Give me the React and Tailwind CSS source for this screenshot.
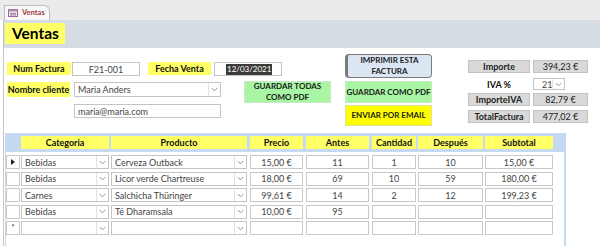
import React from 'react';

const COLS = [
  { key: 'cat', title: 'Categoria', cls: 'ml-[1px] w-[88px]', combo: true },
  { key: 'prod', title: 'Producto', cls: 'ml-[2px] w-[136px]', combo: true },
  { key: 'precio', title: 'Precio', cls: 'ml-[3px] w-[53px]' },
  { key: 'antes', title: 'Antes', cls: 'ml-[3px] w-[63px]' },
  { key: 'cant', title: 'Cantidad', cls: 'ml-[3px] w-[44px]' },
  { key: 'desp', title: 'Después', cls: 'ml-[2px] w-[65px]' },
  { key: 'sub', title: 'Subtotal', cls: 'ml-[2px] w-[68px]' },
];

const ROWS = [
  { mark: 'cur', cat: 'Bebidas', prod: 'Cerveza Outback', precio: '15,00 €', antes: '11', cant: '1', desp: '10', sub: '15,00 €' },
  { cat: 'Bebidas', prod: 'Licor verde Chartreuse', precio: '18,00 €', antes: '69', cant: '10', desp: '59', sub: '180,00 €' },
  { cat: 'Carnes', prod: 'Salchicha Thüringer', precio: '99,61 €', antes: '14', cant: '2', desp: '12', sub: '199,23 €' },
  { cat: 'Bebidas', prod: 'Té Dharamsala', precio: '10,00 €', antes: '95', cant: '', desp: '', sub: '' },
  { mark: 'new', cat: '', prod: '', precio: '', antes: '', cant: '', desp: '', sub: '' },
];

function Chevron() {
  return (
    <svg width="7" height="5" viewBox="0 0 7 5" className="text-[#8a8a8a]">
      <path d="M0.8 1 L3.5 3.8 L6.2 1" fill="none" stroke="currentColor" strokeWidth="0.9" />
    </svg>
  );
}

function Combo({ text, className }) {
  return (
    <div className={`flex items-stretch bg-white border border-[#c4c4c4] ${className}`}>
      <div className="flex-1 pl-[3px] flex items-center text-[#444] truncate">{text}</div>
      <div className="w-[12px] border-l border-[#e2e2e2] flex items-center justify-center">
        <Chevron />
      </div>
    </div>
  );
}

function Label({ children, className }) {
  return (
    <div className={`bg-[#ffff66] font-bold text-[#111] flex items-center justify-center ${className}`}>{children}</div>
  );
}

function GrayBox({ children, bold }) {
  return (
    <div className={`bg-[#d9d9d9] border border-[#c2c2c2] h-[13px] flex items-center justify-center text-[#222] ${bold ? 'font-bold w-[62px]' : 'ml-[3px] w-[55px]'}`}>{children}</div>
  );
}

function Button({ children, className }) {
  return (
    <div className={`flex items-center justify-center text-center whitespace-nowrap font-bold text-[8px] leading-[11px] text-[#1a1a1a] ${className}`}>{children}</div>
  );
}

export default function App() {
  return (
    <div className="w-[600px] h-[246px] overflow-hidden bg-white text-[9px] leading-none" style={{ fontFamily: 'Lato, "Open Sans", sans-serif' }}>
      {/* tab strip */}
      <div className="h-[20px] bg-[#ebebeb] flex items-end pl-[4px]">
        <div className="h-[15px] w-[46px] bg-[#f8f8f8] border border-b-0 border-[#bdbdbd] rounded-tr-[6px] flex items-center pl-[3px] gap-[4px]">
          <svg width="10" height="8" viewBox="0 0 10 8">
            <rect x="0.5" y="0.5" width="9" height="7" fill="#f3e6f0" stroke="#9a6a93" />
            <rect x="0.5" y="0.5" width="9" height="2" fill="#b98ab3" />
            <line x1="2" y1="4.5" x2="8" y2="4.5" stroke="#7d6a85" strokeWidth="0.8" />
            <line x1="2" y1="6" x2="8" y2="6" stroke="#7d6a85" strokeWidth="0.8" />
          </svg>
          <span className="text-[7.5px] font-bold text-[#a33a3f]">Ventas</span>
        </div>
      </div>

      <div className="ml-[3px] border-l border-[#c6c6c6]">
        {/* header band */}
        <div className="h-[28px] bg-[#d6dce4] pt-[3px] pl-[1px]">
          <div className="w-[60px] h-[21px] bg-[#ffff66] flex items-center pl-[7px] text-[15.5px] font-bold text-black">Ventas</div>
        </div>

        {/* form body */}
        <div className="h-[85px] flex items-start">
          <div className="w-[341px] pl-[3px]">
            <div className="mt-[14px] flex items-start">
              <Label className="w-[64px] h-[13px]">Num Factura</Label>
              <div className="ml-[1px] w-[68px] h-[14px] border border-[#c4c4c4] flex items-center justify-center text-[#444]">F21-001</div>
              <Label className="ml-[8px] w-[63px] h-[13px]">Fecha Venta</Label>
              <div className="ml-[3px] w-[68px] h-[14px] border border-[#c4c4c4] flex items-center pl-[11px]">
                <span className="bg-[#3a3a3a] text-white text-[8px] px-[1px] h-[11px] flex items-center">12/03/2021</span>
              </div>
            </div>
            <div className="mt-[5px] flex items-start">
              <div className="w-[237px] pt-[1px]">
                <div className="flex items-start">
                  <Label className="w-[63px] h-[15px]">Nombre cliente</Label>
                  <Combo text="Maria Anders" className="ml-[4px] w-[147px] h-[15px]" />
                </div>
                <div className="mt-[7px] ml-[67px] w-[147px] h-[14px] border border-[#c4c4c4] flex items-center pl-[3px] text-[#444]">maria@maria.com</div>
              </div>
              <Button className="w-[87px] h-[22px] bg-[#a8f5a3] border border-[#c9e8c6]">GUARDAR TODAS<br />COMO PDF</Button>
            </div>
          </div>

          <div className="w-[87px] pt-[6px]">
            <Button className="h-[24px] bg-[#dce6f2] border-[1.5px] border-l-[3px] border-[#7a7a7a] rounded-[4px]">IMPRIMIR ESTA<br />FACTURA</Button>
            <Button className="mt-[3px] h-[22px] bg-[#a8f5a3] border border-[#c9e8c6]">GUARDAR COMO PDF</Button>
            <Button className="mt-[2px] h-[21px] bg-[#ffff00] border border-[#e0e0a0]">ENVIAR POR EMAIL</Button>
          </div>

          <div className="ml-[36px] pt-[12px]">
            <div className="flex">
              <GrayBox bold>Importe</GrayBox>
              <GrayBox>394,23 €</GrayBox>
            </div>
            <div className="mt-[5px] flex items-center">
              <div className="w-[62px] text-center font-bold text-[#111]">IVA %</div>
              <Combo text={<span className="pl-[5px]">21</span>} className="ml-[3px] w-[32px] h-[12px]" />
            </div>
            <div className="mt-[3px] flex">
              <GrayBox bold>ImporteIVA</GrayBox>
              <GrayBox>82,79 €</GrayBox>
            </div>
            <div className="mt-[4px] flex">
              <GrayBox bold>TotalFactura</GrayBox>
              <GrayBox>477,02 €</GrayBox>
            </div>
          </div>
        </div>

        {/* subform */}
        <div className="ml-[1px] w-[561px] h-[120px] border border-r-2 border-[#c5d9f1]">
          <div className="h-[18px] bg-[#c5d9f1] flex pt-[2px]">
            <div className="w-[14px]" />
            {COLS.map(c => (
              <Label key={c.key} className={`h-[13px] ${c.cls}`}>{c.title}</Label>
            ))}
          </div>
          <div className="mt-[3px] flex flex-col gap-[2.5px]">
            {ROWS.map((r, i) => (
              <div key={i} className="flex h-[14px]">
                <div className="w-[14px] bg-white border border-[#c8c8c8] flex items-center justify-center text-[7px] text-[#222]">
                  {r.mark === 'cur' && (
                    <svg width="4" height="6" viewBox="0 0 4 6"><path d="M0 0 L4 3 L0 6 Z" fill="#222" /></svg>
                  )}
                  {r.mark === 'new' && <span className="-mt-[2px]">*</span>}
                </div>
                {COLS.map(c => c.combo ? (
                  <Combo key={c.key} text={r[c.key]} className={c.cls} />
                ) : (
                  <div key={c.key} className={`bg-white border border-[#c8c8c8] flex items-center justify-center text-[#444] ${c.cls}`}>{r[c.key]}</div>
                ))}
              </div>
            ))}
          </div>
        </div>
      </div>
    </div>
  );
}
